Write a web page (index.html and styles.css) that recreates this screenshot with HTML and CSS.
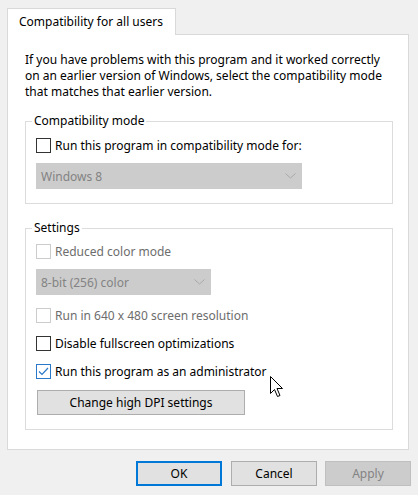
FILE: index.html
```html
<!DOCTYPE html>
<html lang="en">
<head>
<meta charset="utf-8">
<title>Properties - Compatibility</title>
<link rel="stylesheet" href="styles.css">
</head>
<body>
<div class="window">
  <div class="tabs">
    <div class="tab">Compatibility for all users</div>
  </div>
  <div class="panel">
    <p class="intro">If you have problems with this program and it worked correctly<br>on an earlier version of Windows, select the compatibility mode<br>that matches that earlier version.</p>

    <fieldset class="group group-compat">
      <legend class="group-title">Compatibility mode</legend>
      <div class="check">
        <span class="box"></span>
        <span class="check-label">Run this program in compatibility mode for:</span>
      </div>
      <div class="select select-wide">
        <span>Windows 8</span>
        <svg class="chevron" width="11" height="6" viewBox="0 0 11 6"><polyline points="0.5,0.5 5.5,5 10.5,0.5" fill="none" stroke="#a9a9a9" stroke-width="1"/></svg>
      </div>
    </fieldset>

    <fieldset class="group group-settings">
      <legend class="group-title">Settings</legend>
      <div class="check disabled">
        <span class="box"></span>
        <span class="check-label">Reduced color mode</span>
      </div>
      <div class="select select-narrow">
        <span>8-bit (256) color</span>
        <svg class="chevron" width="11" height="6" viewBox="0 0 11 6"><polyline points="0.5,0.5 5.5,5 10.5,0.5" fill="none" stroke="#a9a9a9" stroke-width="1"/></svg>
      </div>
      <div class="check disabled spaced">
        <span class="box"></span>
        <span class="check-label">Run in 640 x 480 screen resolution</span>
      </div>
      <div class="check spaced">
        <span class="box"></span>
        <span class="check-label">Disable fullscreen optimizations</span>
      </div>
      <div class="check spaced checked">
        <span class="box"><svg width="13" height="13" viewBox="0 0 13 13"><polyline points="2,6.5 5,9.5 11,3" fill="none" stroke="#2a78c9" stroke-width="1.2"/></svg></span>
        <span class="check-label">Run this program as an administrator</span>
      </div>
      <button class="btn btn-dpi" type="button">Change high DPI settings</button>
    </fieldset>
  </div>

  <div class="actions">
    <button class="btn btn-action btn-default" type="button">OK</button>
    <button class="btn btn-action" type="button">Cancel</button>
    <button class="btn btn-action btn-disabled" type="button">Apply</button>
  </div>
</div>

<svg class="cursor" width="14" height="22" viewBox="0 0 14 22">
  <path d="M0.5 0.5 V17.5 L4.5 13.5 L7.5 20.5 L10 19.5 L7 12.5 H12.5 Z" fill="#ffffff" stroke="#000000" stroke-width="1" stroke-linejoin="miter"/>
</svg>
</body>
</html>
```
FILE: styles.css
```css
* {
  box-sizing: border-box;
}

html, body {
  margin: 0;
  padding: 0;
  background: #f0f0f0;
}

body {
  width: 418px;
  height: 495px;
  overflow: hidden;
  position: relative;
  font-family: "Noto Sans", "Liberation Sans", sans-serif;
  font-size: 12px;
  color: #000000;
}

.window {
  padding: 8px 0 0 7px;
}

.tabs {
  display: flex;
}

.tab {
  position: relative;
  z-index: 1;
  width: 169px;
  height: 27px;
  margin-bottom: -1px;
  padding: 0 0 1px 11px;
  display: flex;
  align-items: center;
  background: #ffffff;
  border: 1px solid #d9d9d9;
  border-bottom: none;
  line-height: 16px;
  white-space: nowrap;
}

.panel {
  width: 402px;
  height: 416px;
  padding: 17px 15px 0 17px;
  background: #ffffff;
  border: 1px solid #d9d9d9;
}

.intro {
  margin: 0;
  line-height: 16px;
  white-space: nowrap;
}

.group {
  margin: 0;
  min-inline-size: 0;
  border: 1px solid #dcdcdc;
  display: flex;
  flex-direction: column;
  align-items: flex-start;
}

.group-compat {
  margin-top: 13px;
  padding: 8px 10px 14px 10px;
}

.group-settings {
  margin-top: 16px;
  padding: 7px 10px 14px 10px;
}

.group-title {
  margin-left: -4px;
  padding: 0 2px;
  line-height: 16px;
}

.check {
  display: flex;
  align-items: center;
  height: 16px;
  white-space: nowrap;
}

.check.spaced {
  margin-top: 12px;
}

.box {
  width: 15px;
  height: 15px;
  margin-right: 4px;
  border: 1px solid #333333;
  background: #ffffff;
  display: flex;
  align-items: center;
  justify-content: center;
  flex: none;
}

.check.disabled .box {
  border-color: #cccccc;
}

.check.disabled .check-label {
  color: #6d6d6d;
}

.check.checked .box {
  border-color: #2a78c9;
}

.select {
  margin-top: 10px;
  height: 26px;
  padding: 0 6px 0 5px;
  display: flex;
  align-items: center;
  justify-content: space-between;
  background: #cccccc;
  color: #838383;
  white-space: nowrap;
}

.select-wide {
  width: 266px;
}

.select-narrow {
  width: 175px;
}

.chevron {
  flex: none;
}

.btn {
  font-family: inherit;
  font-size: 12px;
  color: #000000;
  background: #e1e1e1;
  border: 1px solid #adadad;
  padding: 0;
  margin: 0;
  line-height: 16px;
}

.btn-dpi {
  margin-top: 11px;
  margin-left: 1px;
  width: 208px;
  height: 25px;
}

.actions {
  display: flex;
  justify-content: flex-end;
  gap: 9px;
  margin-top: 11px;
  padding-right: 7px;
}

.btn-action {
  width: 86px;
  height: 25px;
}

.btn-action:last-child {
  margin-left: -1px;
}

.btn-default {
  border: 2px solid #0078d7;
}

.btn-disabled {
  background: #cccccc;
  border-color: #bfbfbf;
  color: #838383;
}

.cursor {
  position: absolute;
  left: 270px;
  top: 376px;
}
```
